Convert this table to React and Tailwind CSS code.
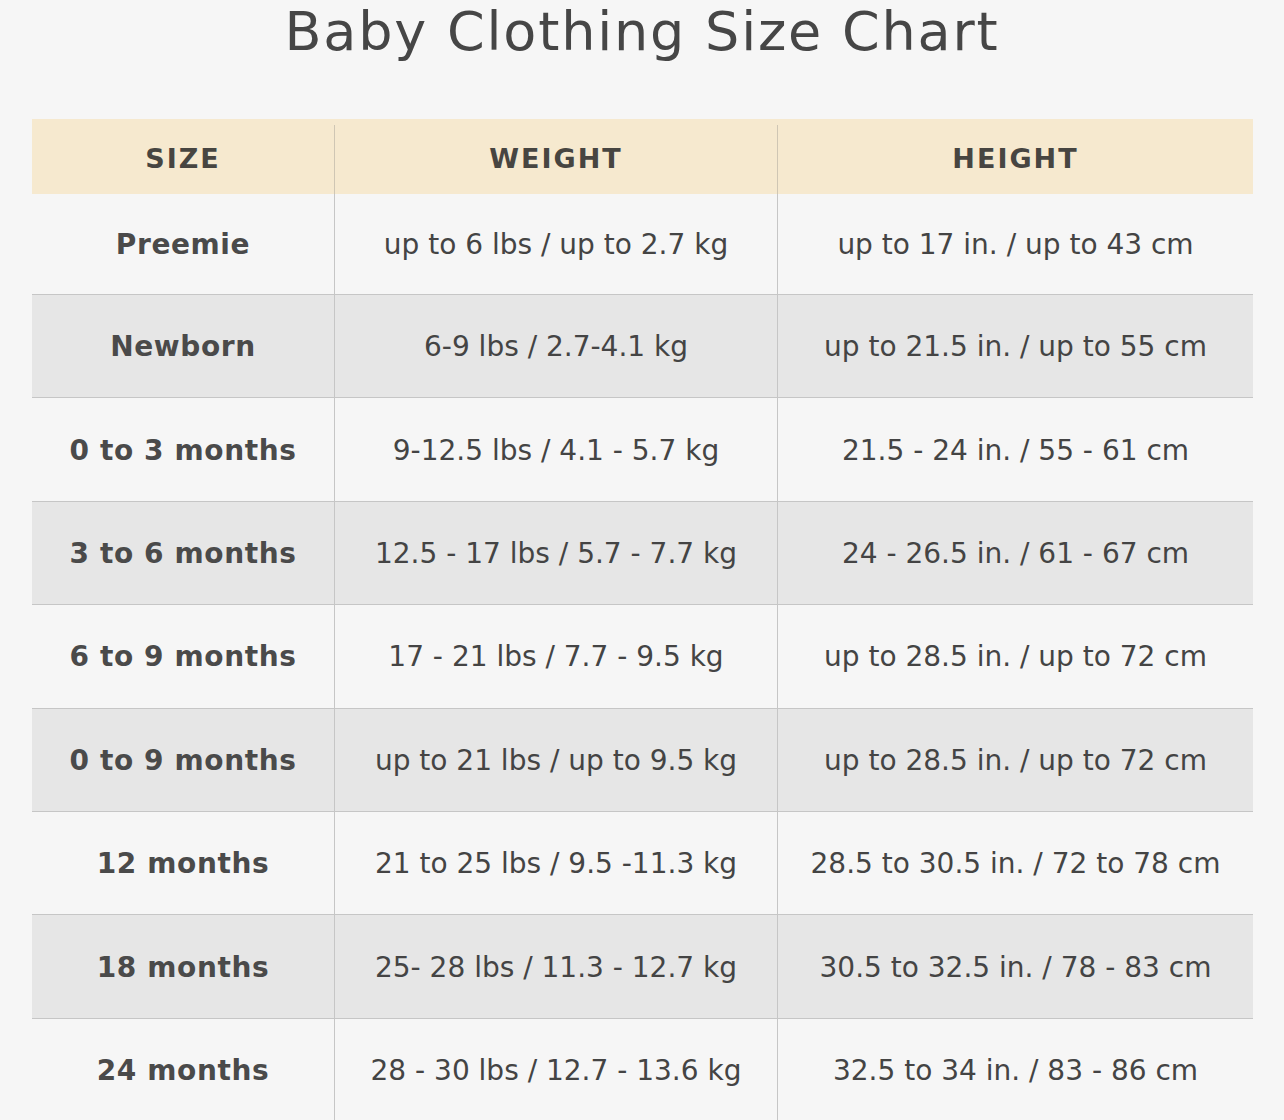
const rows = [
  ["Preemie", "up to 6 lbs / up to 2.7 kg", "up to 17 in. / up to 43 cm"],
  ["Newborn", "6-9 lbs / 2.7-4.1 kg", "up to 21.5 in. / up to 55 cm"],
  ["0 to 3 months", "9-12.5 lbs / 4.1 - 5.7 kg", "21.5 - 24 in. / 55 - 61 cm"],
  ["3 to 6 months", "12.5 - 17 lbs / 5.7 - 7.7 kg", "24 - 26.5 in. / 61 - 67 cm"],
  ["6 to 9 months", "17 - 21 lbs / 7.7 - 9.5 kg", "up to 28.5 in. / up to 72 cm"],
  ["0 to 9 months", "up to 21 lbs / up to 9.5 kg", "up to 28.5 in. / up to 72 cm"],
  ["12 months", "21 to 25 lbs / 9.5 -11.3 kg", "28.5 to 30.5 in. / 72 to 78 cm"],
  ["18 months", "25- 28 lbs / 11.3 - 12.7 kg", "30.5 to 32.5 in. / 78 - 83 cm"],
  ["24 months", "28 - 30 lbs / 12.7 - 13.6 kg", "32.5 to 34 in. / 83 - 86 cm"],
];

const App = () => {
  return (
    <div className="w-[1284px] h-[1120px] overflow-hidden bg-[#f6f6f6] text-[#444] font-['DejaVu_Sans',sans-serif]">
      <h1 className="h-[64px] leading-[64px] text-center text-[54px] font-normal tracking-[1.8px] text-[#464646]">
        Baby Clothing Size Chart
      </h1>

      <div className="mt-[55px] ml-[32px] w-[1221px]">
        <div className="flex h-[75px] bg-[#f6e9cf] text-[27px] font-bold tracking-[2px] text-[#474541]">
          <div className="w-[302px] mt-[6px] flex items-center justify-center">SIZE</div>
          <div className="w-[443px] mt-[6px] flex items-center justify-center border-l border-[#cfc6b4]">WEIGHT</div>
          <div className="flex-1 mt-[6px] flex items-center justify-center border-l border-[#cfc6b4]">HEIGHT</div>
        </div>

        {rows.map((r, i) => (
          <div
            key={i}
            className={`flex ${i === 0 ? "h-[101px]" : "h-[103.4px]"} border-b border-[#c6c6c6] text-[28px] ${
              i % 2 === 1 ? "bg-[#e6e6e6]" : "bg-[#f6f6f6]"
            }`}
          >
            <div className="w-[302px] pt-[2px] flex items-center justify-center font-bold tracking-[0.6px] text-[#4a4a4a]">{r[0]}</div>
            <div className="w-[443px] pt-[2px] flex items-center justify-center border-l border-[#c6c6c6]">{r[1]}</div>
            <div className="flex-1 pt-[2px] flex items-center justify-center border-l border-[#c6c6c6]">{r[2]}</div>
          </div>
        ))}
      </div>
    </div>
  );
};

export default App;
